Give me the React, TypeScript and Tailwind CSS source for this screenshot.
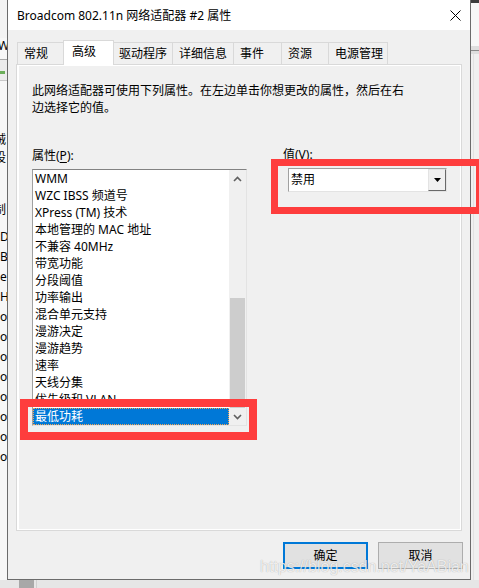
import React from 'react';

const ITEMS = [
  'WMM',
  'WZC IBSS 频道号',
  'XPress (TM) 技术',
  '本地管理的 MAC 地址',
  '不兼容 40MHz',
  '带宽功能',
  '分段阈值',
  '功率输出',
  '混合单元支持',
  '漫游决定',
  '漫游趋势',
  '速率',
  '天线分集',
  '优先级和 VLAN',
  '最低功耗',
];

const TABS = [
  { label: '常规', w: 'w-[48px]' },
  { label: '高级', w: 'w-[51px]', active: true },
  { label: '驱动程序', w: 'w-[60px]' },
  { label: '详细信息', w: 'w-[61px]' },
  { label: '事件', w: 'w-[48px]' },
  { label: '资源', w: 'w-[47px]' },
  { label: '电源管理', w: 'w-[60px]', last: true },
];

function Chevron({ up }: { up?: boolean }) {
  return (
    <svg width="9" height="6" viewBox="0 0 9 6">
      <polyline
        points={up ? '1,5 4.5,1.5 8,5' : '1,1 4.5,4.5 8,1'}
        fill="none"
        stroke="#606060"
        strokeWidth="1.6"
      />
    </svg>
  );
}

function LeftStrip() {
  const rows = ['De', 'BC', 'e', 'Ho', 'o', 'o', 'o', 'o', 'o', 'o', 'o', 'o'];
  return (
    <div className="w-[7px] h-[580px] overflow-hidden flex flex-col bg-[#f7f7f7] text-[12px] text-black">
      <div className="h-[38px] bg-[#f3f3f3]" />
      <div className="h-[21px] leading-[16px] -ml-[2px]">W</div>
      <div className="h-px bg-[#a9a9a9]" />
      <div className="h-[20px] bg-[#ececec] flex items-end pb-[6px]">
        <div className="w-[5px] h-[3px] bg-[#6cae5a]" />
      </div>
      <div className="h-px bg-[#c8c8c8]" />
      <div className="h-[50px]" />
      <div className="h-[18px] leading-[18px] -ml-[6px]">贼</div>
      <div className="h-[26px] leading-[18px] -ml-[6px]">设</div>
      <div className="h-[48px] leading-[18px] -ml-[6px] pt-[26px]">制</div>
      <div className="h-[4px]" />
      {rows.map((r, i) => (
        <div key={i} className="h-[20px] leading-[20px] whitespace-nowrap">
          {r}
        </div>
      ))}
    </div>
  );
}

function RightStrip() {
  return (
    <div className="flex-1 h-[580px] flex flex-col bg-[#f0f0f0]">
      <div className="h-[3px] bg-[#3c3c3c]" />
      <div className="h-[43px] bg-[#f7f7f7]" />
      <div className="h-[4px] bg-[#dedede]" />
      <div className="h-px bg-[#8a8a8a]" />
      <div className="h-[3px] bg-[#dedede]" />
      <div className="flex-1 border-l border-[#e2e2e2] ml-[2px]" />
    </div>
  );
}

function ListBox() {
  return (
    <div className="w-[215px] h-[257px] border border-t-[#828282] border-l-[#a0a0a0] border-r-[#e3e3e3] border-b-[#e3e3e3] bg-white flex">
      <div className="flex-1 flex flex-col overflow-hidden">
        {ITEMS.map((item, i) =>
          i === ITEMS.length - 1 ? (
            <div
              key={item}
              className="h-[17px] leading-[15px] px-[1px] bg-[#0078d7] text-white border border-dotted border-[#f5a452] whitespace-nowrap"
            >
              {item}
            </div>
          ) : (
            <div key={item} className="h-[17px] leading-[17px] px-[2px] whitespace-nowrap">
              {item}
            </div>
          )
        )}
      </div>
      <div className="w-[17px] bg-[#f0f0f0] flex flex-col">
        <div className="h-[17px] flex items-center justify-center">
          <Chevron up />
        </div>
        <div className="flex-1 flex flex-col justify-end px-[1px]">
          <div className="h-[110px] bg-[#cdcdcd]" />
        </div>
        <div className="h-[17px] flex items-center justify-center">
          <Chevron />
        </div>
      </div>
    </div>
  );
}

function ValueCombo() {
  return (
    <div className="ml-[5px] w-[159px] h-[24px] border border-t-[#a0a0a0] border-l-[#a0a0a0] border-r-[#e3e3e3] border-b-[#e3e3e3] bg-white flex items-center">
      <div className="flex-1 pl-[2px] leading-[20px]">禁用</div>
      <div className="w-[18px] h-[22px] bg-[#f0f0f0] border border-t-[#e3e3e3] border-l-[#e3e3e3] border-r-[#696969] border-b-[#696969] flex items-center justify-center">
        <svg width="7" height="4" viewBox="0 0 7 4">
          <polygon points="0,0 7,0 3.5,4" fill="#000" />
        </svg>
      </div>
    </div>
  );
}

export default function App() {
  return (
    <div className="relative w-[479px] h-[588px] overflow-hidden bg-[#e4e4e4] font-['Segoe_UI','Noto_Sans','Noto_Sans_CJK_SC',sans-serif] text-[12px] text-black">
      <div className="flex h-[580px]">
        <LeftStrip />

        {/* Dialog window */}
        <div className="w-[464px] h-[580px] border-l border-r border-b border-[#6b6b6b] bg-[#f0f0f0] flex flex-col">
          {/* Title bar */}
          <div className="h-[30px] bg-white flex items-center pl-[9px] pr-[9px]">
            <span className="flex-1 leading-[16px] pt-[1px]">Broadcom 802.11n 网络适配器 #2 属性</span>
            <svg width="11" height="11" viewBox="0 0 11 11">
              <path d="M0.5 0.5 L10.5 10.5 M10.5 0.5 L0.5 10.5" stroke="#000" strokeWidth="1" />
            </svg>
          </div>

          {/* Tabs */}
          <div className="flex items-end pt-[10px] pl-[9px]">
            {TABS.map((t) =>
              t.active ? (
                <div
                  key={t.label}
                  className={`${t.w} h-[25px] -mx-[2px] -mb-px relative z-10 bg-white border-t border-l border-r border-[#d9d9d9] pl-[8px] leading-[22px]`}
                >
                  {t.label}
                </div>
              ) : (
                <div
                  key={t.label}
                  className={`${t.w} h-[22px] bg-[#f0f0f0] border-t border-l ${t.last ? 'border-r' : ''} border-[#d9d9d9] pl-[6px] leading-[21px]`}
                >
                  {t.label}
                </div>
              )
            )}
          </div>

          {/* Panel */}
          <div className="mx-[8px] h-[467px] border border-[#d9d9d9] bg-white p-[1px] pl-[2px]">
            <div className="h-full bg-[#f0f0f0] pt-[16px] pl-[13px]">
              <p className="leading-[17px]">
                此网络适配器可使用下列属性。在左边单击你想更改的属性，然后在右
                <br />
                边选择它的值。
              </p>
              <div className="flex mt-[31px]">
                <div className="flex flex-col">
                  <div className="leading-[17px]">
                    属性(<span className="underline underline-offset-2">P</span>):
                  </div>
                  <div className="mt-[5px]">
                    <ListBox />
                  </div>
                </div>
                <div className="flex flex-col ml-[36px] -mt-[1px]">
                  <div className="leading-[17px]">
                    值(<span className="underline underline-offset-2">V</span>):
                  </div>
                  <div className="mt-[5px]">
                    <ValueCombo />
                  </div>
                </div>
              </div>
            </div>
          </div>

          {/* Buttons */}
          <div className="flex justify-end gap-[10px] mt-[11px] pr-[7px]">
            <button className="w-[85px] h-[27px] bg-[#e1e1e1] border-2 border-[#0078d7] leading-[23px]">
              确定
            </button>
            <button className="w-[85px] h-[27px] bg-[#e1e1e1] border border-[#adadad] leading-[25px]">
              取消
            </button>
          </div>
        </div>

        <RightStrip />
      </div>

      {/* Desktop strip below */}
      <div className="h-[8px] flex bg-[#e6e6e6]">
        <div className="w-[19px]" />
        <div className="w-[15px] bg-[#a8a8a8]" />
        <div className="w-px ml-[2px] bg-[#d0d0d0]" />
      </div>

      {/* Red annotation boxes */}
      <div className="absolute left-[20px] top-[399px] w-[237px] h-[41px] border-[8px] border-[#fe3d3d]" />
      <div className="absolute left-[271px] top-[159px] w-[212px] h-[55px] border-[7px] border-[#fe3d3d]" />

      {/* Watermark */}
      <div className="absolute left-[260px] top-[559px] font-['Liberation_Sans',sans-serif] text-[16px] leading-[16px] text-white/80 [text-shadow:0_0_1px_rgba(0,0,0,0.35)] whitespace-nowrap">
        https://blog.csdn.net/YaABian
      </div>
    </div>
  );
}
